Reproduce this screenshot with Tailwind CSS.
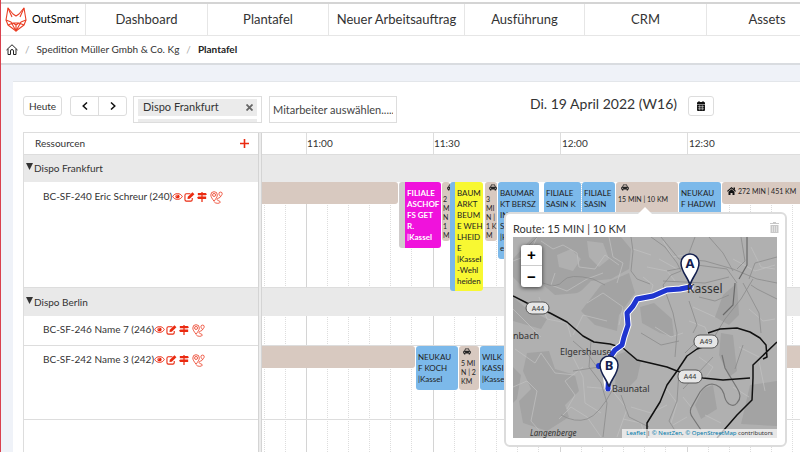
<!DOCTYPE html>
<html lang="de">
    <head>
        <meta charset="UTF-8" />
        <meta
            name="viewport"
            content="width=device-width, initial-scale=1.0" />
        <title>OutSmart - Plantafel</title>
        <script src="https://cdn.jsdelivr.net/npm/@tailwindcss/browser@4"></script>
    </head>
    <body class="h-screen overflow-hidden border-l border-[#d9414e] bg-[#eff2f8] font-['Lato',sans-serif] text-[#333]">
        <!-- Icons -->
        <svg class="hidden">
            <symbol id="eye" viewBox="0 0 24 18">
                <path d="M1.500 9C6 .5 18 .5 22.500 9 18 17.500 6 17.500 1.500 9Z" fill="none" stroke="currentColor" stroke-width="2" />
                <circle cx="12" cy="9" r="4.600" fill="currentColor" />
                <path d="M9.500 9a2.500 2.500 0 0 1 2.500-2.500" fill="none" stroke="#fff" stroke-width="1.300" />
            </symbol>
            <symbol id="edit" viewBox="0 0 24 22">
                <path d="M14 4H5a3 3 0 0 0-3 3v10a3 3 0 0 0 3 3h10a3 3 0 0 0 3-3v-4" fill="none" stroke="currentColor" stroke-width="2.400" />
                <path d="M7.500 15.500l.8-4.800L18.500.8l4.300 4.200-10.200 9.900z" fill="currentColor" />
            </symbol>
            <symbol id="signs" viewBox="0 0 24 24">
                <path d="M10.500 0h3v2.500H21L24 5.200 21 8h-7.500v3H22v5.500h-8.500V24h-3v-7.500H3L0 13.800 3 11h7.500V8H2V2.500h8.500z" fill="currentColor" />
            </symbol>
            <symbol id="route" viewBox="0 0 24 24">
                <g fill="none" stroke="currentColor" stroke-width="1.400">
                    <path d="M7.500 19C4 14 1.500 11 1.500 7.300a6 6 0 0 1 12 0C13.500 11 11 14 7.500 19Z" />
                    <circle cx="7.500" cy="7.300" r="2.800" />
                    <path d="M8 20.500c2 3 11 3 11 0s-6-2-6-5 6-2 6-5" />
                    <path d="M19.500 10.500c-2-3-3-4-3-5.500a3 3 0 0 1 6 0c0 1.500-1 2.500-3 5.500Z" />
                </g>
            </symbol>
            <symbol id="car" viewBox="0 0 24 20">
                <path fill="currentColor" fill-rule="evenodd" d="M6.500 1h11l2.800 7c2 .3 3.200 1.500 3.200 3.500V16H21v3h-4v-3H7v3H3v-3H.5v-4.500C.5 9.500 1.700 8.300 3.700 8zM8 3.500L6.300 8h11.400L16 3.500zM5 10.500a1.700 1.700 0 1 0 0 3.400 1.700 1.700 0 0 0 0-3.400zm14 0a1.700 1.700 0 1 0 0 3.400 1.700 1.700 0 0 0 0-3.400z" />
            </symbol>
        </svg>

        <div class="flex h-full flex-col">
            <!-- Navigation -->
            <header class="border-b border-[#e6e6e6] bg-white pt-[2px]">
                <nav class="flex h-[33px] border-t-2 border-[#d4d4d4] text-[13px]">
                    <a href="#" class="flex w-[85px] shrink-0 items-center gap-[5px] border-r border-[#e6e6e6] pl-[4px] text-[11px] text-black">
                        <svg class="h-[25px] w-[22px]" viewBox="0 0 22 25" fill="none" stroke="#ea3e24" stroke-width="1.100" stroke-linejoin="round">
                            <path d="M3 1L1 13l2 5 8 6 8-6 2-5-2-12-5 6-3 2-3-2z" />
                            <path d="M3 1l4 9M19 1l-4 9M1 13l5 2 5 9 5-9 5-2M3 18l5-2h6l5 2M8 16l3 2 3-2M11 18v6" />
                        </svg>
                        OutSmart
                    </a>
                    <a href="#" class="flex w-[122px] shrink-0 items-center justify-center border-r border-[#e6e6e6]">Dashboard</a>
                    <a href="#" class="flex w-[121px] shrink-0 items-center justify-center border-r border-[#e6e6e6]">Plantafel</a>
                    <a href="#" class="flex w-[136px] shrink-0 items-center justify-center border-r border-[#e6e6e6]">Neuer Arbeitsauftrag</a>
                    <a href="#" class="flex w-[120px] shrink-0 items-center justify-center border-r border-[#e6e6e6]">Ausführung</a>
                    <a href="#" class="flex w-[122px] shrink-0 items-center justify-center border-r border-[#e6e6e6]">CRM</a>
                    <a href="#" class="flex w-[120px] shrink-0 items-center justify-center">Assets</a>
                </nav>
            </header>

            <!-- Breadcrumb -->
            <div class="flex h-[29px] shrink-0 items-center gap-[7px] border-b-2 border-[#d9dce0] bg-white pl-[5px] text-[10px]">
                <a href="#" aria-label="Start">
                    <svg class="h-[11px] w-[12px]" viewBox="0 0 24 22" fill="none" stroke="#222" stroke-width="2">
                        <path d="M1 12L12 1.500 23 12M4 10v11h5v-7a3 3 0 0 1 6 0v7h5V10" />
                    </svg>
                </a>
                <span class="text-[#aaa]">/</span>
                <a href="#" class="text-[#333]">Spedition Müller Gmbh &amp; Co. Kg</a>
                <span class="text-[#aaa]">/</span>
                <span class="font-bold text-[#222]">Plantafel</span>
            </div>

            <main class="mt-[16px] ml-[12px] flex flex-1 flex-col border-t border-[#e3e6ea] bg-white pl-[10px]">
                <!-- Toolbar -->
                <div class="flex h-[50px] shrink-0 items-start pt-[14px]">
                    <button class="h-[20px] w-[39px] rounded-[3px] border border-[#ddd] text-[10px]">Heute</button>
                    <div class="ml-[8px] flex h-[20px] w-[57px] rounded-[3px] border border-[#ddd]">
                        <button aria-label="Zurück" class="flex flex-1 items-center justify-center border-r border-[#ddd]">
                            <svg class="h-[8px] w-[6px]" viewBox="0 0 6 8" fill="none" stroke="#111" stroke-width="1.500"><path d="M5 .5L1.200 4 5 7.500" /></svg>
                        </button>
                        <button aria-label="Weiter" class="flex flex-1 items-center justify-center">
                            <svg class="h-[8px] w-[6px]" viewBox="0 0 6 8" fill="none" stroke="#111" stroke-width="1.500"><path d="M1 .5L4.800 4 1 7.500" /></svg>
                        </button>
                    </div>
                    <div class="ml-[6px] h-[27px] w-[129px] overflow-hidden border border-[#ddd] px-[4px] pt-[2px]">
                        <div class="flex h-[17px] items-center justify-between bg-[#ebebeb] pr-[4px] pl-[5px] text-[11px]">
                            Dispo Frankfurt
                            <button aria-label="Entfernen">
                                <svg class="h-[7px] w-[7px]" viewBox="0 0 7 7" stroke="#666" stroke-width="1.800"><path d="M.5 .5l6 6M6.500 .5l-6 6" /></svg>
                            </button>
                        </div>
                        <div class="mt-[3px] h-[17px] bg-[#ebebeb]"></div>
                    </div>
                    <input
                        type="text"
                        aria-label="Mitarbeiter"
                        placeholder="Mitarbeiter auswählen....."
                        class="ml-[7px] h-[27px] w-[128px] border border-[#ddd] px-[3px] text-[11px] placeholder:text-[#444]" />
                    <h2 class="ml-[133px] w-[152px] text-[14px] leading-[16px] whitespace-nowrap text-[#333]">Di. 19 April 2022 (W16)</h2>
                    <button aria-label="Kalender" class="ml-[6px] flex h-[20px] w-[26px] items-center justify-center rounded-[3px] border border-[#ddd]">
                        <svg class="h-[10px] w-[8px]" viewBox="0 0 8 10">
                            <path fill="#111" d="M0 2a1 1 0 0 1 1-1h.5V0h1v1h3V0h1v1H7a1 1 0 0 1 1 1v1H0zM0 3.600h8V9a1 1 0 0 1-1 1H1a1 1 0 0 1-1-1z" />
                            <path stroke="#fff" stroke-width=".5" d="M.8 5.700h6.400M.8 7.800h6.400M2.700 4.300v5M5.300 4.300v5" />
                        </svg>
                    </button>
                </div>

                <!-- Planner -->
                <div class="flex flex-1 border-t border-l border-[#ddd] text-[10px]">
                    <!-- Resources -->
                    <div class="flex w-[234px] shrink-0 flex-col">
                        <div class="flex h-[21px] items-center justify-between pr-[9px] pl-[11px]">
                            Ressourcen
                            <button aria-label="Hinzufügen">
                                <svg class="h-[9px] w-[9px]" viewBox="0 0 9 9" stroke="#ea2a10" stroke-width="1.600"><path d="M4.500 0v9M0 4.500h9" /></svg>
                            </button>
                        </div>
                        <div class="flex h-[28px] items-center gap-px border-t border-[#ddd] bg-[#e9e9e9] pl-[2px]">
                            <svg class="mb-[4px] h-[7px] w-[7px]" viewBox="0 0 7 7"><path d="M0 0h7L3.500 7z" fill="#333" /></svg>
                            Dispo Frankfurt
                        </div>
                        <div class="h-[105px] pt-[7px] pl-[19px]">
                            <div class="flex items-center text-[#ea2a10]">
                                <span class="text-[#333]">BC-SF-240 Eric Schreur (240)</span>
                                <svg class="h-[9px] w-[11px]"><use href="#eye" /></svg>
                                <svg class="ml-px h-[10px] w-[11px]"><use href="#edit" /></svg>
                                <svg class="ml-[2px] h-[10px] w-[10px]"><use href="#signs" /></svg>
                                <svg class="mt-[2px] ml-[3px] h-[13px] w-[13px]"><use href="#route" /></svg>
                            </div>
                        </div>
                        <div class="flex h-[29px] items-center gap-px border-t border-[#ddd] bg-[#e9e9e9] pl-[2px]">
                            <svg class="mb-[4px] h-[7px] w-[7px]" viewBox="0 0 7 7"><path d="M0 0h7L3.500 7z" fill="#333" /></svg>
                            Dispo Berlin
                        </div>
                        <div class="h-[29px] pt-[6px] pl-[19px]">
                            <div class="flex items-center text-[#ea2a10]">
                                <span class="text-[#333]">BC-SF-246 Name 7 (246)</span>
                                <svg class="h-[9px] w-[11px]"><use href="#eye" /></svg>
                                <svg class="ml-px h-[10px] w-[11px]"><use href="#edit" /></svg>
                                <svg class="ml-[2px] h-[10px] w-[10px]"><use href="#signs" /></svg>
                                <svg class="mt-[2px] ml-[3px] h-[13px] w-[13px]"><use href="#route" /></svg>
                            </div>
                        </div>
                        <div class="h-[74px] border-t border-[#ddd] pt-[6px] pl-[19px]">
                            <div class="flex items-center text-[#ea2a10]">
                                <span class="text-[#333]">BC-SF-242 Name 3 (242)</span>
                                <svg class="h-[9px] w-[11px]"><use href="#eye" /></svg>
                                <svg class="ml-px h-[10px] w-[11px]"><use href="#edit" /></svg>
                                <svg class="ml-[2px] h-[10px] w-[10px]"><use href="#signs" /></svg>
                                <svg class="mt-[2px] ml-[3px] h-[13px] w-[13px]"><use href="#route" /></svg>
                            </div>
                        </div>
                        <div class="flex-1 border-t border-[#ddd]"></div>
                    </div>
                    <div class="w-[4px] shrink-0 border-x border-[#d4d4d4] bg-[#ececec]"></div>

                    <!-- Timeline -->
                    <div class="relative flex min-w-0 flex-1 flex-col">
                        <!-- slot lines, one block per half hour -->
                        <div class="absolute inset-0 flex overflow-hidden pt-[21px]">
                            <div class="flex w-[44px] shrink-0">
                                <div class="w-[2px]"></div>
                                <div class="w-[21px] border-l border-dotted border-[#ddd]"></div>
                                <div class="w-[21px] border-l border-dotted border-[#ddd]"></div>
                            </div>
                            <div class="grid w-[127px] shrink-0 grid-cols-6 divide-x divide-dotted divide-[#ddd] border-l border-[#d4d4d4]"><i></i><i></i><i></i><i></i><i></i><i></i></div>
                            <div class="grid w-[127px] shrink-0 grid-cols-6 divide-x divide-dotted divide-[#ddd] border-l border-[#d4d4d4]"><i></i><i></i><i></i><i></i><i></i><i></i></div>
                            <div class="grid w-[127px] shrink-0 grid-cols-6 divide-x divide-dotted divide-[#ddd] border-l border-[#d4d4d4]"><i></i><i></i><i></i><i></i><i></i><i></i></div>
                            <div class="grid w-[127px] shrink-0 grid-cols-6 divide-x divide-dotted divide-[#ddd] border-l border-[#d4d4d4]"><i></i><i></i><i></i><i></i><i></i><i></i></div>
                        </div>

                        <div class="relative flex h-[21px] items-stretch overflow-hidden pl-[44px] leading-[20px]">
                            <div class="w-[127px] shrink-0 border-l border-[#ddd]">11:00</div>
                            <div class="w-[127px] shrink-0 border-l border-[#ddd]">11:30</div>
                            <div class="w-[127px] shrink-0 border-l border-[#ddd] pl-px">12:00</div>
                            <div class="w-[127px] shrink-0 border-l border-[#ddd] pl-px">12:30</div>
                        </div>
                        <div class="relative h-[28px] border-t border-[#ddd] bg-[#e9e9e9]"></div>

                        <!-- Eric Schreur -->
                        <div class="relative z-10 flex h-[105px] items-start text-[8px] leading-[11px] text-[#222]">
                            <div class="h-[22px] w-[136px] shrink-0 rounded-r-[3px] bg-[#d8c9c0]"></div>
                            <div class="ml-px h-[66px] w-[42px] shrink-0 rounded-[3px] border-l-[6px] border-[#d0cccc] bg-[#f012dc] pt-[6px] pl-[2px] font-bold whitespace-nowrap text-white">FILIALE<br />ASCHOF<br />FS GET<br />R.<br />|Kassel</div>
                            <div class="ml-px h-[59px] w-[8px] shrink-0 overflow-hidden rounded-[3px] bg-[#d8c9c0] pt-[2px] pl-px leading-[9px] whitespace-nowrap">
                                <svg class="ml-[4px] h-[7px] w-[8px]"><use href="#car" /></svg>
                                <p class="pt-[4px] text-[7px]">2<br />M<br />N<br />1<br />M</p>
                            </div>
                            <div class="h-[109px] w-[33px] shrink-0 rounded-[3px] border-l-[5px] border-[#7cb9ea] bg-[#f8f832] pt-[6px] pl-[2px] whitespace-nowrap">BAUM<br />ARKT<br />BEUM<br />E WEH<br />LHEID<br />E<br />|Kassel<br />-Wehl<br />heiden</div>
                            <div class="ml-[2px] h-[59px] w-[12px] shrink-0 rounded-[3px] bg-[#d8c9c0] pt-[2px] pl-px leading-[9px] whitespace-nowrap">
                                <svg class="ml-[3px] h-[7px] w-[8px]"><use href="#car" /></svg>
                                <p class="pt-[4px] text-[7px]">3<br />MI<br />N |<br />1 K<br />M</p>
                            </div>
                            <div class="ml-px h-[77px] w-[41px] shrink-0 overflow-hidden rounded-[3px] bg-[#7cb9ea] pt-[6px] pl-[2px] whitespace-nowrap">BAUMAR<br />KT BERSZ<br />IN<br />S<br />|K<br />e</div>
                            <div class="ml-[5px] h-[45px] w-[37px] shrink-0 rounded-[3px] bg-[#7cb9ea] pt-[6px] pl-[2px] whitespace-nowrap">FILIALE<br />SASIN K</div>
                            <div class="ml-px h-[45px] w-[33px] shrink-0 rounded-[3px] bg-[#7cb9ea] pt-[6px] pl-[2px] whitespace-nowrap">FILIALE<br />SASIN</div>
                            <div class="relative ml-px h-[45px] w-[62px] shrink-0 rounded-[3px] bg-[#d8c9c0] pt-[2px] pl-[2px]">
                                <svg class="ml-[3px] h-[7px] w-[8px]"><use href="#car" /></svg>
                                <p class="pt-[3px] text-[7px] whitespace-nowrap">15 MIN | 10 KM</p>

                                <!-- Route popup -->
                                <div class="absolute top-[30px] -left-[112px] z-20 w-[283px] rounded-[6px] border-2 border-[#dcdcdc] bg-white pt-[8px] pr-[8px] pb-[7px] pl-[7px]">
                                    <svg class="absolute -top-[8px] left-[131px] h-[9px] w-[16px]" viewBox="0 0 16 9"><path d="M0 9L8 1l8 8z" fill="#fff" /></svg>
                                    <div class="flex h-[15px] items-start justify-between text-[11px] leading-[14px] text-[#333]">
                                        <span>Route: 15 MIN | 10 KM</span>
                                        <button aria-label="Löschen" class="-mr-[2px]">
                                            <svg class="h-[11px] w-[9px]" viewBox="0 0 9 11" fill="#c8c8c8"><path d="M0 1h3V0h3v1h3v1H0z" /><path d="M.5 3h8v8h-8z" /><path d="M2.500 4v6M4.500 4v6M6.500 4v6" stroke="#e8e8e8" stroke-width=".8" /></svg>
                                        </button>
                                    </div>
                                    <div class="relative">
                                        <svg class="block w-full" viewBox="0 0 264 201">
                                            <rect width="264" height="201" fill="#b0b0b0" />
                                            <!-- woods -->
                                            <g fill="#a3a3a3">
                                                <path d="M20 0h88l10 12-2 20-18 10-20 2-12 12-24 2-14-12-18 4L0 40V22z" />
                                                <path d="M88 48l28-12 6 20-16 22-2 16-22-6-14-14z" />
                                                <path d="M14 116l22-2 6 18 20 6 4 16-14 14 4 12-22 14-24-8-4-22 12-12-8-18z" />
                                                <path d="M104 118l10-4 14 10-4 18-14 14-8-8z" />
                                                <path d="M127 70l14-4 18 16 2 18-14-4-18-10z" />
                                                <path d="M224 46l2 32-10 10-14-8 8-22z" />
                                                <path d="M237 148l27-4v45l-36-2z" />
                                                <path d="M0 130l8 8-4 24-4 4zM0 60l14 12 20 10-6 10L0 84z" />
                                                <path d="M208 96l12 2 4 36-8 6-10-22zM190 152l10-4 4 24-16 10-6-14z" />
                                            </g>
                                            <g fill="#b0b0b0">
                                                <path d="M44 18l14-6 10 10-8 12-14-4zM74 4l16 2 6 16-10 8-10-10zM56 60l16-8 6 8-14 8z" />
                                            </g>
                                            <!-- minor roads -->
                                            <g fill="none" stroke="#c2c2c2" stroke-width=".7">
                                                <path d="M28 4l12 8 10-4 14 8 2 14 16 2 10-14 14 10M42 36l-4 12 16 6 20-12 16-6M74 66l16-10 20 14-4 18M0 72l16 16 12 12M26 60l8 22 20 4 4 14M60 98l10-20 24 6M2 112l20 14 6-10 14 20 20 2M0 150l14-6 10 10-6 30 12 14M46 182l12-12 16 10 14 20M60 120l10 20 2 26 16 10M74 150l24 2 16 20-10 28M118 170l20 6 16-8M130 40l10 8-4 14M142 90l16 10 12-4M150 4l10 16 12-2M70 130l-18 14 10 14-8 14M110 182l18 4 4 14M238 10l10 20 14 2M220 22l22 12 20-6M236 72l14 12 12-2M186 120l14 10-8 12M246 124l6 30M192 178l16 8M170 160l8 10M24 0l-8 18-16 6M96 0l4 20 10 6-6 20M120 12l18 6" />
                                                <path d="M134 30l20 4 8 10M146 22l18 10M180 70l22 10M176 84l16 6 4 10M226 110l20 10M220 150l16 10M152 150l12 16-6 20M160 188l14-8" />
                                            </g>
                                            <!-- main roads -->
                                            <g fill="none" stroke="#8c8c8c" stroke-width=".8" stroke-linejoin="round">
                                                <path d="M118 0l2 14-2 20 6 8 13 5M10 14L24 0M30 46q14 6 20-2t30-2l12 6M138 0l14 10 12 16 4 8-10 4-8 10 10 28 4 20-2 24M148 0l18 22 26 2 28 8 24 10 20 4M154 34l30-6 30 4 10 14M150 44l42 2 24-6M182 0l-6 16-6 12M224 32l8-8-4-24M196 0l14 16 10 18M240 42l-12 20-16 20-12 20M264 20l-22 6-6 16M264 62l-20-10-6-4M186 60l16 4 14-6M230 46l16 30 2 20M128 96l20 12 18-4M176 64l8 24-4 8" />
                                                <path d="M78 104l-2 26 12 16 6 20-4 34M48 178q14 8 26 4t26-30M108 158l8 22 20 10M60 134l26-4M166 134l-2 30-8 20 10 16M188 100l-16 16M200 120l-30 32M222 132l8-24M60 104l14 12 10 14" />
                                            </g>
                                            <path d="M234 0v28l-8 14M222 46l-2 22-10 10" fill="none" stroke="#6a6a6a" stroke-width="1.200" />
                                            <!-- river -->
                                            <path d="M209 118l3 13 12 20q6 9 0 15-3 4-8 1-4-3-5-10-3-9-12-10-6 0-12 8l-9 16q-2 5 2 10l8 12" fill="none" stroke="#757575" stroke-width="1.200" />
                                            <!-- motorways -->
                                            <g fill="none" stroke="#111" stroke-width="1.500" stroke-linejoin="round">
                                                <path d="M0 59l14 7 23 10 17 9 16 14 11 6 16 2 13 4 14 12 13 3 17 4 10 4 26 7 20 2 27-2" />
                                                <path d="M134 201v-15l13-21 7-17 10-14 10-15 10-7 6-2M195 96l12-4 17-1 13 4 10 6 6 7 1 12-4 2M264 105l-24 23v13l-1 22-15 15-20 23" />
                                            </g>
                                            <!-- route -->
                                            <g fill="none" stroke-linejoin="round" stroke-linecap="round">
                                                <path d="M177 50l-10 2-13 1-14 6-16 3-4 7-6 7 1 12-4 12-2 8-7 5-5 7-5 9 3 22" stroke="#fff" stroke-width="7" />
                                                <path d="M177 50l-10 2-13 1-14 6-16 3-4 7-6 7 1 12-4 12-2 8-7 5-5 7-10 9M95 151l2-31" stroke="#1f35d0" stroke-width="5" />
                                                <circle cx="86" cy="129" r="1" stroke="#1f35d0" stroke-width="4" />
                                            </g>
                                            <!-- road signs -->
                                            <g fill="#e6e6e6" stroke="#555">
                                                <rect x="13" y="65" width="23" height="12" rx="6" />
                                                <rect x="181" y="98" width="24" height="13" rx="6" />
                                                <rect x="165" y="133" width="24" height="13" rx="6" />
                                            </g>
                                            <g class="font-['Noto_Sans',sans-serif] text-[7px]" fill="#333" text-anchor="middle">
                                                <text x="25" y="74">A44</text>
                                                <text x="193" y="107">A49</text>
                                                <text x="177" y="142">A44</text>
                                            </g>
                                            <g class="font-['Noto_Sans',sans-serif] text-[9px]" fill="#333">
                                                <text x="0" y="102">nbach</text>
                                                <text x="47" y="118">Elgershause</text>
                                                <text x="99" y="155">Baunatal</text>
                                                <text x="17" y="199" font-style="italic" class="text-[8px]">Langenberge</text>
                                                <text x="174" y="56" class="text-[12px]">Kassel</text>
                                            </g>
                                            <!-- pins -->
                                            <g fill="#fff" stroke="#14204f" stroke-width="1.500">
                                                <path d="M177 48c-2-8-9-13-9-22a9 9 0 0 1 18 0c0 9-7 14-9 22z" />
                                                <path d="M96 150c-2-8-9-13-9-22a9 9 0 0 1 18 0c0 9-7 14-9 22z" />
                                            </g>
                                            <circle cx="95" cy="152" r="2.500" fill="#1f35d0" />
                                            <g class="font-['Noto_Sans',sans-serif] text-[13px] font-bold" fill="#14204f" text-anchor="middle">
                                                <text x="177" y="31">A</text>
                                                <text x="96" y="133">B</text>
                                            </g>
                                        </svg>
                                        <div class="absolute top-[8px] left-[8px] flex w-[21px] flex-col rounded-[3px] bg-white font-['Liberation_Sans',sans-serif] text-[15px] font-bold text-black shadow-[0_1px_4px_rgba(0,0,0,0.65)]">
                                            <button class="h-[21px] border-b border-[#ccc] leading-[20px]">+</button>
                                            <button class="h-[21px] leading-[20px]">−</button>
                                        </div>
                                        <div class="absolute right-0 bottom-0 bg-white/70 px-[4px] font-['Noto_Sans',sans-serif] text-[6px] leading-[9px] whitespace-nowrap text-[#333]">
                                            <a href="#" class="text-[#0078a8]">Leaflet</a> | <a href="#" class="text-[#0078a8]">© NextZen</a>, <a href="#" class="text-[#0078a8]">© OpenStreetMap</a> contributors
                                        </div>
                                    </div>
                                </div>
                            </div>
                            <div class="ml-px h-[45px] w-[42px] shrink-0 rounded-[3px] bg-[#7cb9ea] pt-[6px] pl-[2px] whitespace-nowrap">NEUKAU<br />F HADWI</div>
                            <div class="ml-px flex h-[22px] min-w-[78px] flex-1 gap-[2px] rounded-l-[3px] bg-[#d8c9c0] pt-[4px] pl-[5px] text-[7px] whitespace-nowrap">
                                <svg class="mt-px h-[8px] w-[9px]" viewBox="0 0 18 16"><path d="M9 0l9 8-1.500 1.500L9 3 1.500 9.500 0 8zM13 1h3v5l-3-3zM9 4.500l6 5.200V16h-4v-4H7v4H3V9.700z" fill="#111" /></svg>
                                272 MIN | 451 KM
                            </div>
                        </div>

                        <div class="relative h-[29px] border-t border-[#ddd] bg-[#e9e9e9]"></div>
                        <div class="relative h-[29px]"></div>

                        <!-- Name 3 -->
                        <div class="relative flex h-[74px] items-start border-t border-[#ddd] text-[8px] leading-[11px] text-[#222]">
                            <div class="h-[22px] w-[153px] shrink-0 rounded-r-[3px] bg-[#d8c9c0]"></div>
                            <div class="ml-px h-[44px] w-[42px] shrink-0 rounded-[3px] bg-[#7cb9ea] pt-[6px] pl-[2px] whitespace-nowrap">NEUKAU<br />F KOCH<br />|Kassel</div>
                            <div class="ml-px h-[44px] w-[20px] shrink-0 rounded-[3px] bg-[#d8c9c0] pt-[2px] pl-[2px] text-[7px] leading-[9px] whitespace-nowrap">
                                <svg class="ml-[2px] h-[7px] w-[8px]"><use href="#car" /></svg>
                                <p class="pt-[4px]">5 MI<br />N | 2<br />KM</p>
                            </div>
                            <div class="ml-px h-[44px] w-[42px] shrink-0 rounded-[3px] bg-[#7cb9ea] pt-[6px] pl-[2px] whitespace-nowrap">WILK<br />KASSI<br />|Kasse</div>
                            <div class="ml-px h-[22px] flex-1 bg-[#d8c9c0]"></div>
                        </div>
                        <div class="relative flex-1 border-t border-[#ddd]"></div>
                    </div>
                </div>
            </main>
        </div>
    </body>
</html>
